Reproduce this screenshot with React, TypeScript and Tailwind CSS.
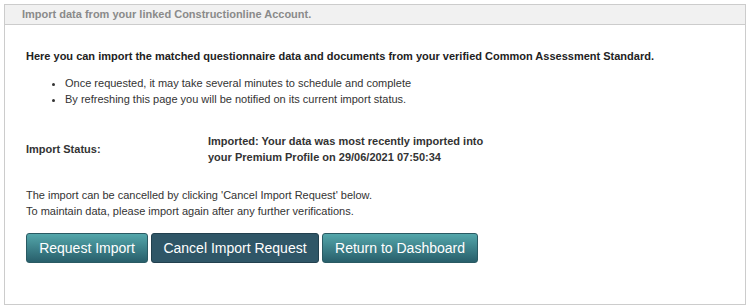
export default function App() {
  return (
    <div className="bg-white w-[751px] h-[307px] pt-[4px] pl-[4px] font-['Liberation_Sans',Arial,sans-serif]">
      <div className="w-[742px] h-[301px] border border-[#cccccc]">
        {/* Header */}
        <div className="h-[20px] bg-[#f1f1f1] border-b border-[#cccccc] pl-[17px] text-[11px] leading-[19px] font-bold text-[#8a8a8a]">
          Import data from your linked Constructionline Account.
        </div>

        <div className="pl-[21px] pt-[24px] text-[11px] text-[#222222]">
          <p className="font-bold leading-[14px]">
            Here you can import the matched questionnaire data and documents from your verified Common Assessment Standard.
          </p>
          <ul className="mt-[12px] pl-[39px] list-disc leading-[16px] text-[#333333]">
            <li>Once requested, it may take several minutes to schedule and complete</li>
            <li>By refreshing this page you will be notified on its current import status.</li>
          </ul>

          <div className="mt-[26px] flex items-center font-bold text-[#333333]">
            <div className="w-[182px]">Import Status:</div>
            <div className="leading-[16px]">
              Imported: Your data was most recently imported into
              <br />
              your Premium Profile on 29/06/2021 07:50:34
            </div>
          </div>

          <div className="mt-[22px] leading-[16px] text-[#333333]">
            <p>The import can be cancelled by clicking 'Cancel Import Request' below.</p>
            <p>To maintain data, please import again after any further verifications.</p>
          </div>

          <div className="mt-[14px] flex gap-[3px]">
            <button className="h-[30px] w-[122px] rounded-[3px] border border-[#2a5a63] bg-gradient-to-b from-[#54a7ab] to-[#285f6b] text-white text-[14px]">
              Request Import
            </button>
            <button className="h-[30px] w-[168px] rounded-[3px] border border-[#22404e] bg-[#2f5667] text-white text-[14px]">
              Cancel Import Request
            </button>
            <button className="h-[30px] w-[156px] rounded-[3px] border border-[#2a5a63] bg-gradient-to-b from-[#54a7ab] to-[#285f6b] text-white text-[14px]">
              Return to Dashboard
            </button>
          </div>
        </div>
      </div>
    </div>
  )
}
